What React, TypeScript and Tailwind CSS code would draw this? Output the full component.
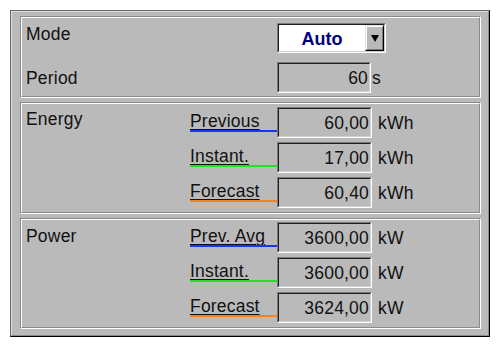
import React from "react";

const Sunken = ({
  w,
  h,
  children,
  bg = "bg-[#bababa]",
}: {
  w: string;
  h: string;
  children?: React.ReactNode;
  bg?: string;
}) => (
  <div
    className={`${w} ${h} shrink-0 border border-t-[#7a7a7a] border-l-[#7a7a7a] border-b-white border-r-white`}
  >
    <div
      className={`h-full w-full border border-t-[#1e1e1e] border-l-[#1e1e1e] border-b-[#cfcfcf] border-r-[#cfcfcf] ${bg} flex items-center`}
    >
      {children}
    </div>
  </div>
);

const Group = ({ h, children }: { h: string; children: React.ReactNode }) => (
  <div
    className={`w-[461px] ${h} border border-t-[#8a8a8a] border-l-[#8a8a8a] border-r-white border-b-white`}
  >
    <div className="h-full w-full border border-t-white border-l-white border-r-[#8a8a8a] border-b-[#8a8a8a] pl-[4px]">
      {children}
    </div>
  </div>
);

const ValueRow = ({
  label,
  bar,
  value,
  unit,
  top,
}: {
  label: string;
  bar: string;
  value: string;
  unit: string;
  top: string;
}) => (
  <div className={`flex h-[31px] ${top}`}>
    <div className="w-[87px] h-[31px] flex flex-col justify-end pb-[6px]">
      <div className="leading-[18px] h-[18px] whitespace-nowrap">
        <span className="underline decoration-1 underline-offset-[2px] decoration-[#111]">
          {label}
        </span>
      </div>
      <div className={`h-[2px] w-[87px] ${bar}`} />
    </div>
    <Sunken w="w-[95px]" h="h-[31px]">
      <div className="w-full text-right pr-[1px] pt-[1px] leading-[20px]">{value}</div>
    </Sunken>
    <div className="ml-[6px] flex items-center pt-[1px] leading-[20px]">{unit}</div>
  </div>
);

export default function App() {
  return (
    <div className="w-[500px] h-[347px] bg-white font-['Liberation_Sans',Arial,sans-serif] text-[17.5px] tracking-[0.2px] text-[#111] pt-[10px] pl-[10px]">
      <div className="w-[480px] h-[327px] border border-t-[#6a6a6a] border-l-[#6a6a6a] border-r-black border-b-black">
        <div className="h-full w-full border border-t-[#dedede] border-l-[#dedede] border-r-[#8a8a8a] border-b-[#8a8a8a] bg-[#bababa] pt-[4px] pl-[8px] flex flex-col gap-[4px]">
          {/* Group 1 */}
          <Group h="h-[82px]">
            <div className="flex mt-[5px] h-[30px]">
              <div className="w-[251px] pt-[1px] leading-[20px]">Mode</div>
              <div className="w-[109px] h-[30px] border border-t-[#7a7a7a] border-l-[#7a7a7a] border-b-white border-r-white">
                <div className="h-full w-full border border-t-[#1e1e1e] border-l-[#1e1e1e] border-b-[#cfcfcf] border-r-[#cfcfcf] bg-white flex">
                  <div className="flex-1 flex items-center justify-center font-bold text-[18px] tracking-normal text-[#000080] leading-[20px] pt-[1px]">
                    Auto
                  </div>
                  <div className="w-[19px] h-full border border-t-[#e0e0e0] border-l-[#e0e0e0] border-r-black border-b-black">
                    <div className="h-full w-full border border-t-white border-l-white border-r-[#7a7a7a] border-b-[#7a7a7a] bg-[#bababa] flex items-center justify-center">
                      <svg width="8" height="7" viewBox="0 0 8 7">
                        <polygon points="0,0 8,0 4,7" fill="#000" />
                      </svg>
                    </div>
                  </div>
                </div>
              </div>
            </div>
            <div className="flex mt-[9px] h-[31px]">
              <div className="w-[251px] pt-[6px] leading-[20px]">Period</div>
              <Sunken w="w-[94px]" h="h-[31px]">
                <div className="w-full text-right pr-[1px] pt-[1px] leading-[20px]">60</div>
              </Sunken>
              <div className="ml-[1px] flex items-center pt-[1px] leading-[20px]">s</div>
            </div>
          </Group>

          {/* Group 2 */}
          <Group h="h-[112px]">
            <div className="flex pt-[3px]">
              <div className="w-[164px] pt-[2px] leading-[20px]">Energy</div>
              <div className="flex flex-col">
                <ValueRow top="" label="Previous" bar="bg-[#1638f0]" value="60,00" unit="kWh" />
                <ValueRow top="mt-[4px]" label="Instant." bar="bg-[#22e022]" value="17,00" unit="kWh" />
                <ValueRow top="mt-[4px]" label="Forecast" bar="bg-[#f5821e]" value="60,40" unit="kWh" />
              </div>
            </div>
          </Group>

          {/* Group 3 */}
          <Group h="h-[111px]">
            <div className="flex pt-[2px]">
              <div className="w-[164px] pt-[4px] leading-[20px]">Power</div>
              <div className="flex flex-col">
                <ValueRow top="" label="Prev. Avg" bar="bg-[#1638f0]" value="3600,00" unit="kW" />
                <ValueRow top="mt-[4px]" label="Instant." bar="bg-[#22e022]" value="3600,00" unit="kW" />
                <ValueRow top="mt-[4px]" label="Forecast" bar="bg-[#f5821e]" value="3624,00" unit="kW" />
              </div>
            </div>
          </Group>
        </div>
      </div>
    </div>
  );
}
